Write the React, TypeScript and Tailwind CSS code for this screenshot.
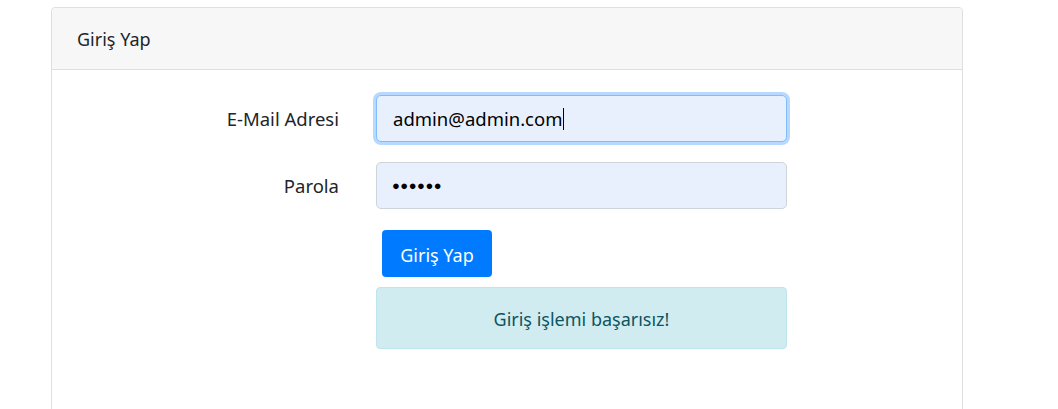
const font = { fontFamily: '"Noto Sans", "Open Sans", sans-serif' };

function FieldRow({ label, children }: { label: string; children: React.ReactNode }) {
  return (
    <div className="flex items-center">
      <label className="w-[251px] shrink-0 pt-[1px] text-right text-[18.5px] text-[#212529]">{label}</label>
      <div className="ml-[37px]">{children}</div>
    </div>
  );
}

export default function App() {
  return (
    <div className="min-h-[409px] bg-white pl-[51px] pt-[7px]" style={font}>
      <div className="h-[420px] w-[912px] rounded-[4px] border border-[#dfdfdf]">
        <div className="flex h-[62px] items-center rounded-t-[4px] border-b border-[#dfdfdf] bg-[#f7f7f7] px-[25px] pt-[2px] text-[18px] text-[#212529]">
          Giriş Yap
        </div>
        <div className="pt-[25px] pl-[36px]">
          <div className="flex flex-col gap-[20px]">
            <FieldRow label="E-Mail Adresi">
              <div className="flex h-[47px] w-[411px] items-center rounded-[5px] border border-[#80bdff] bg-[#e8f0fe] px-[16px] text-[18.5px] text-black ring-[3px] ring-[#b8d9ff]">
                <span>admin@admin.com</span>
                <span className="ml-[1px] h-[22px] w-px bg-black" />
              </div>
            </FieldRow>
            <FieldRow label="Parola">
              <div className="flex h-[47px] w-[411px] items-center rounded-[5px] border border-[#ced4da] bg-[#e8f0fe] px-[15px] text-black">
                <span className="text-[13px] tracking-[0.5px]">●●●●●●</span>
              </div>
            </FieldRow>
          </div>
          <div className="ml-[288px] mt-[21px] flex flex-col">
            <button className="ml-[6px] h-[47px] w-[110px] rounded-[4px] bg-[#007bff] pt-[3px] text-[18px] text-white">
              Giriş Yap
            </button>
            <div className="mt-[10px] flex h-[62px] w-[411px] items-center justify-center rounded-[4px] border border-[#bee5eb] bg-[#d1ecf1] pt-[3px] text-[18px] text-[#0c5460]">
              Giriş işlemi başarısız!
            </div>
          </div>
        </div>
      </div>
    </div>
  );
}
